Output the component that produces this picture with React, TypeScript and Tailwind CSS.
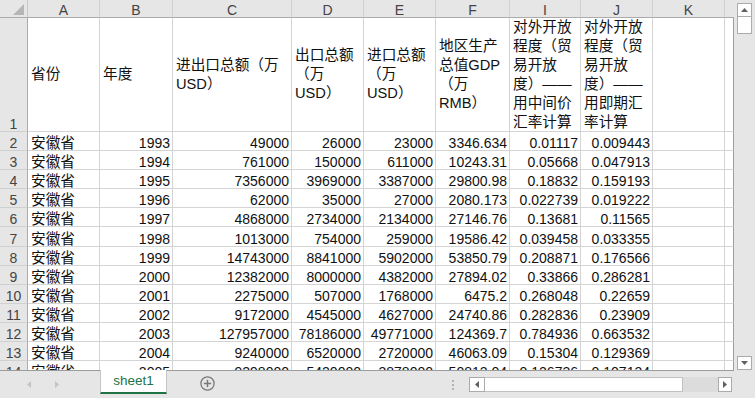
import React from "react";

const data: string[][] = [
  ["1993", "49000", "26000", "23000", "3346.634", "0.01117", "0.009443"],
  ["1994", "761000", "150000", "611000", "10243.31", "0.05668", "0.047913"],
  ["1995", "7356000", "3969000", "3387000", "29800.98", "0.18832", "0.159193"],
  ["1996", "62000", "35000", "27000", "2080.173", "0.022739", "0.019222"],
  ["1997", "4868000", "2734000", "2134000", "27146.76", "0.13681", "0.11565"],
  ["1998", "1013000", "754000", "259000", "19586.42", "0.039458", "0.033355"],
  ["1999", "14743000", "8841000", "5902000", "53850.79", "0.208871", "0.176566"],
  ["2000", "12382000", "8000000", "4382000", "27894.02", "0.33866", "0.286281"],
  ["2001", "2275000", "507000", "1768000", "6475.2", "0.268048", "0.22659"],
  ["2002", "9172000", "4545000", "4627000", "24740.86", "0.282836", "0.23909"],
  ["2003", "127957000", "78186000", "49771000", "124369.7", "0.784936", "0.663532"],
  ["2004", "9240000", "6520000", "2720000", "46063.09", "0.15304", "0.129369"],
  ["2005", "9298000", "5420000", "3878000", "50812.04", "0.126736", "0.107134"],
];

const letters = ["A", "B", "C", "D", "E", "F", "I", "J", "K"];

const headerLines: string[][] = [
  ["省份"],
  ["年度"],
  ["进出口总额（万", "USD）"],
  ["出口总额", "（万", "USD）"],
  ["进口总额", "（万", "USD）"],
  ["地区生产", "总值GDP", "（万", "RMB）"],
  ["对外开放", "程度（贸", "易开放", "度）——", "用中间价", "汇率计算"],
  ["对外开放", "程度（贸", "易开放", "度）——", "用即期汇", "率计算"],
  [],
];

const colHdr =
  "bg-[#e6e6e6] border-r border-b border-r-[#d0d0d0] border-b-[#ababab] flex items-end justify-center text-[14px] leading-[14px] text-[#444]";
const rowHdr =
  "bg-[#e6e6e6] border-r border-b border-r-[#ababab] border-b-[#d0d0d0] flex items-end justify-center text-[14px] leading-[13px] text-[#444]";
const numCell =
  "border-r border-b border-[#d4d4d4] flex items-end justify-end pr-[2px] overflow-hidden whitespace-nowrap text-[14px] leading-[13px] text-[#111]";
const txtCell =
  "border-r border-b border-[#d4d4d4] flex items-end pl-[3px] overflow-hidden whitespace-nowrap text-[14.67px] leading-[13px] text-[#111]";
const lastCell = "border-r border-b border-b-[#d4d4d4] border-r-[#9c9c9c]";

function Tri({ dir, color, w, h }: { dir: "up" | "down" | "left" | "right"; color: string; w: number; h: number }) {
  const pts =
    dir === "up"
      ? `0,${h} ${w},${h} ${w / 2},0`
      : dir === "down"
      ? `0,0 ${w},0 ${w / 2},${h}`
      : dir === "left"
      ? `${w},0 ${w},${h} 0,${h / 2}`
      : `0,0 0,${h} ${w},${h / 2}`;
  return (
    <svg width={w} height={h} viewBox={`0 0 ${w} ${h}`}>
      <polygon points={pts} fill={color} />
    </svg>
  );
}

export default function App() {
  return (
    <div className="w-[755px] h-[398px] overflow-hidden bg-white flex flex-col font-[family-name:'Liberation_Sans','Noto_Sans_CJK_SC',sans-serif]">
      <div className="flex h-[371px]">
        <div className="w-[734px] h-[371px] overflow-hidden border-b border-b-[#9c9c9c]">
          <div className="grid grid-cols-[28px_72px_73px_119px_72px_72px_74px_71px_72px_72px_9px] grid-rows-[18px_114px_repeat(13,19.1px)]">
            {/* corner */}
            <div className="bg-[#e6e6e6] border-r border-b border-r-[#c8c8c8] border-b-[#ababab] flex items-end justify-end pr-[3px] pb-[2px]">
              <svg width="11" height="11" viewBox="0 0 11 11">
                <polygon points="11,0 11,11 0,11" fill="#b5b5b5" />
              </svg>
            </div>
            {letters.map((l) => (
              <div key={l} className={colHdr}>
                {l}
              </div>
            ))}
            <div className="bg-[#e6e6e6] border-b border-b-[#ababab]" />

            {/* row 1 */}
            <div className={rowHdr}>1</div>
            {headerLines.map((lines, i) => (
              <div
                key={i}
                className="border-r border-b border-[#d4d4d4] flex flex-col justify-center pl-[3px] text-[14.67px] leading-[19px] text-[#111] whitespace-nowrap overflow-hidden"
              >
                {lines.map((ln, j) => (
                  <div key={j}>{ln}</div>
                ))}
              </div>
            ))}
            <div className={lastCell} />

            {/* data rows */}
            {data.map((row, r) => (
              <React.Fragment key={r}>
                <div className={rowHdr}>{r + 2}</div>
                <div className={txtCell}>安徽省</div>
                {row.map((v, c) => (
                  <div key={c} className={numCell}>
                    {v}
                  </div>
                ))}
                <div className="border-r border-b border-[#d4d4d4]" />
                <div className={lastCell} />
              </React.Fragment>
            ))}
          </div>
        </div>

        {/* vertical scrollbar */}
        <div className="w-[21px] h-[371px] bg-[#e6e6e6] flex flex-col pt-[3px] pl-[3px] pb-[1px]">
          <div className="w-[15px] h-[14px] bg-white border border-[#ababab] flex items-center justify-center">
            <Tri dir="up" color="#606060" w={7} h={4} />
          </div>
          <div className="w-[15px] h-[17px] bg-white border border-t-0 border-[#ababab]" />
          <div className="flex-1" />
          <div className="w-[15px] h-[14px] bg-white border border-[#ababab] flex items-center justify-center">
            <Tri dir="down" color="#606060" w={7} h={4} />
          </div>
        </div>
      </div>

      {/* tab bar */}
      <div className="flex items-start h-[27px] bg-[#e6e6e6]">
        <div className="w-[100px] h-[26px] flex items-center pl-[27px] gap-[24px]">
          <Tri dir="left" color="#c4c4c4" w={4} h={7} />
          <Tri dir="right" color="#c4c4c4" w={4} h={7} />
        </div>
        <div className="-mt-[1px] w-[67px] h-[24px] bg-white border-x border-[#c6c6c6] border-b-2 border-b-[#217346] flex items-center justify-center text-[13.5px] text-[#217346]">
          sheet1
        </div>
        <div className="ml-[33px] mt-[5px]">
          <svg width="15" height="15" viewBox="0 0 15 15">
            <circle cx="7.5" cy="7.5" r="6.6" fill="none" stroke="#7a7a7a" strokeWidth="1.3" />
            <line x1="3.8" y1="7.5" x2="11.2" y2="7.5" stroke="#7a7a7a" strokeWidth="1.5" />
            <line x1="7.5" y1="3.8" x2="7.5" y2="11.2" stroke="#7a7a7a" strokeWidth="1.5" />
          </svg>
        </div>
        <div className="ml-[237px] mt-[9px] flex flex-col gap-[2px]">
          <div className="w-[2px] h-[2px] bg-[#b4b4b4]" />
          <div className="w-[2px] h-[2px] bg-[#b4b4b4]" />
          <div className="w-[2px] h-[2px] bg-[#b4b4b4]" />
        </div>
        <div className="ml-[15px] mt-[6px] w-[263px] h-[15px] flex">
          <div className="w-[16px] h-[15px] bg-white border border-[#ababab] flex items-center justify-center">
            <Tri dir="left" color="#606060" w={4} h={7} />
          </div>
          <div className="w-[198px] h-[15px] bg-white border-y border-r border-[#c0c0c0]" />
          <div className="flex-1 h-[15px] bg-[#dcdcdc]" />
          <div className="w-[14px] h-[15px] bg-white border border-[#ababab] flex items-center justify-center">
            <Tri dir="right" color="#606060" w={4} h={7} />
          </div>
        </div>
      </div>
    </div>
  );
}
